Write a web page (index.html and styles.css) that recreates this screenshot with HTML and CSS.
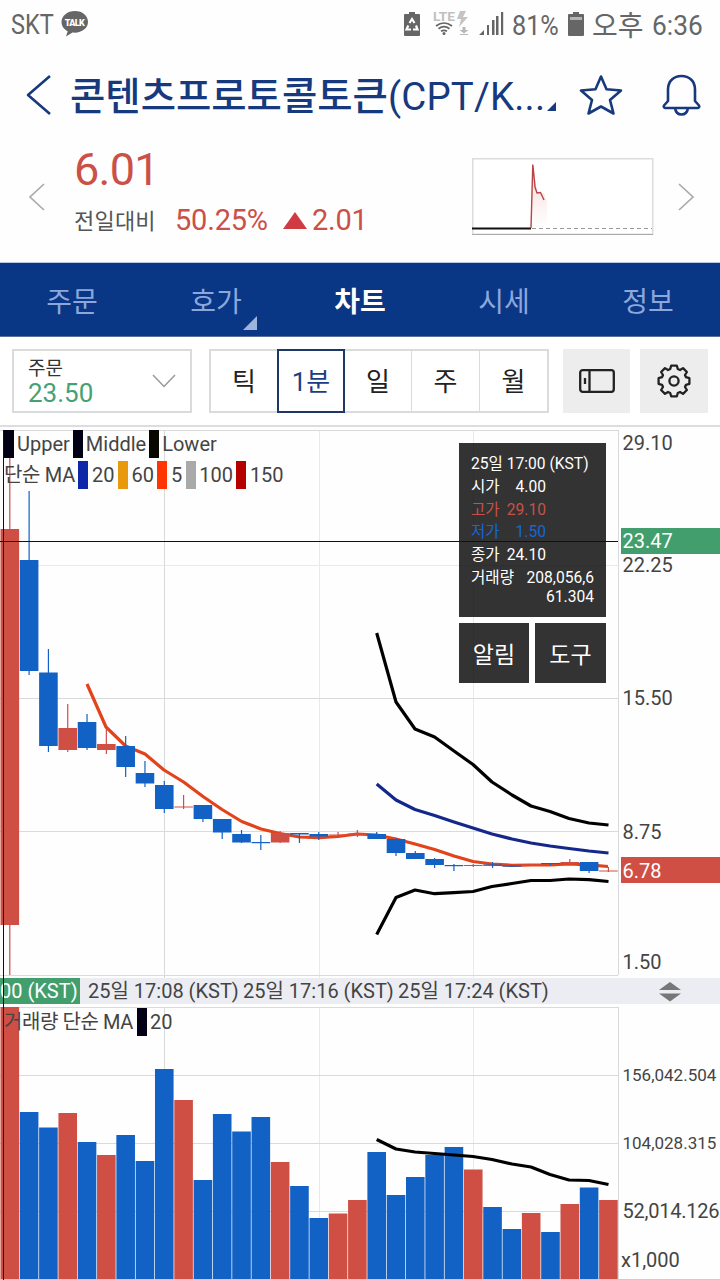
FILE: index.html
```html
<!DOCTYPE html>
<html lang="ko">
<head>
  <meta charset="UTF-8">
  <title>콘텐츠프로토콜토큰 차트</title>
  <link rel="stylesheet" href="styles.css">
</head>
<body>
  <div class="status">
    <span class="carrier">SKT</span>
    <svg class="talk" width="28" height="26" viewBox="0 0 28 26">
      <path d="M14 0C6.500 0 .5 4.800 .5 11c0 4 2.500 7.300 6.200 9.200L5 25.500l6.500-4c8.500 1 15.500-4 15.500-10.500C27 4.800 21.500 0 14 0z" fill="#666"/>
      <text x="13.800" y="14.500" text-anchor="middle" textLength="20">TALK</text>
    </svg>
    <svg class="status-icons" width="108" height="28" viewBox="402 10 108 28">
      <path d="M409 12h6v2h4q1 0 1 1v20q0 1-1 1h-14q-1 0-1-1V15q0-1 1-1h4z" fill="#666"/>
      <g fill="none" stroke="#fff" stroke-width="2.200">
        <path d="M409.500 23l2.500-4 2.500 4M416 25.500l1.500 4h-4.500M411 29.500h-4.500l1.800-4"/>
      </g>
      <text x="433" y="21" class="lte" textLength="22" lengthAdjust="spacingAndGlyphs">LTE</text>
      <path d="M460 11h6l-3 6h5l-9 10 2-8h-4z" fill="#c4c4c4"/>
      <path d="M462.500 27h3v3h3l-4.500 3.500-4.500-3.500h3zM460 34h8v1h-8z" fill="#b8b8b8"/>
      <g fill="none" stroke="#666" stroke-width="1.700">
        <path d="M436 26q8-6 16 0M438.500 28.700q5.500-4 11 0M441 31.300q3-2 6 0"/>
      </g>
      <circle cx="444" cy="33.500" r="1.500" fill="#666"/>
      <path d="M479 35h5v-5zM487 25h2v10h-2zM492 20h2.500v15h-2.500zM496 16h2.500v19h-2.500zM501 12h2.200v23h-2.200z" fill="#666"/>
    </svg>
    <span class="percent">81%</span>
    <svg class="battery" width="16" height="24" viewBox="0 0 16 24">
      <path d="M5 0h6v2h4q1 0 1 1v20q0 1-1 1H1q-1 0-1-1V3q0-1 1-1h4z" fill="#666"/>
      <path d="M2 5h12v3H2z" fill="#b5b5b5"/>
    </svg>
    <span class="ampm">오후</span>
    <span class="clock">6:36</span>
  </div>

  <header class="title-bar">
    <svg class="back" width="26" height="42" viewBox="0 0 26 42"><path d="M24 2L2 21l22 19"/></svg>
    <h1>콘텐츠프로토콜토큰<span class="latin">(CPT/K...</span></h1>
    <i class="corner"></i>
    <svg class="star" width="44" height="42" viewBox="0 0 44 42"><path d="M22 2.500l5.500 12.700 14.500 1.300-11 9.500 3.500 13.500L22 32.500 9.500 39.500 13 26 2 16.500l14.500-1.300z"/></svg>
    <svg class="bell" width="40" height="42" viewBox="0 0 40 42"><path d="M6 27V15.500C6 7 12 2 19.500 2S33 7 33 15.500V27l4 4.500q1 2-1.500 2.500H3.500Q1 33.500 2 31.500zM13 34q1 6.500 6.500 6.500T26 34"/></svg>
  </header>

  <section class="quote">
    <svg class="arrow" width="18" height="30" viewBox="0 0 18 30"><path d="M16 2L2 15l14 13"/></svg>
    <div class="price">
      <div class="current">6.01</div>
      <div class="change"><span class="label">전일대비</span><span class="rate">50.25%</span><i class="up"></i><span>2.01</span></div>
    </div>
    <svg class="mini" width="182" height="78" viewBox="0 0 182 78">
      <defs><linearGradient id="fade" x2="0" y2="1"><stop stop-color="#f3c0c0"/><stop offset="1" stop-color="#fff"/></linearGradient></defs>
      <rect x=".75" y=".75" width="180" height="75.500" fill="#fff" stroke="#dcdcdc" stroke-width="1.500"/>
      <path d="M0 76.500h181" stroke="#aaa"/>
      <path d="M59 70L61 7l4 27 3 2 4-1 3 8v27z" fill="url(#fade)" opacity=".6"/>
      <path d="M60 70.500h120" stroke="#999" stroke-dasharray="4 3"/>
      <path d="M0 70.500h59" stroke="#111" stroke-width="1.800"/>
      <path d="M59 70l1.800-63.500L62 18l1 11 2 6 3.500-.5L72 42" fill="none" stroke="#b94444" stroke-width="1.400"/>
    </svg>
    <svg class="arrow" width="18" height="30" viewBox="0 0 18 30"><path d="M2 2l14 13L2 28"/></svg>
  </section>

  <nav class="tabs">
    <a>주문</a>
    <a class="more">호가</a>
    <a class="active">차트</a>
    <a>시세</a>
    <a>정보</a>
  </nav>

  <div class="toolbar">
    <div class="order">
      <div>
        <div class="order-name">주문</div>
        <div class="order-price">23.50</div>
      </div>
      <svg width="24" height="14" viewBox="0 0 24 14"><path d="M1 1l11 11.500L23 1"/></svg>
    </div>
    <div class="periods">
      <button>틱</button>
      <button class="on">1분</button>
      <button>일</button>
      <button>주</button>
      <button>월</button>
    </div>
    <button class="tool">
      <svg width="36" height="24" viewBox="0 0 36 24"><rect x="1.200" y="1.200" width="33.600" height="21.600" rx="2.500"/><path d="M10.500 1v22M6 9v6"/></svg>
    </button>
    <button class="tool">
      <svg width="34" height="34" viewBox="-17 -17 34 34">
        <path d="M-3.800-12l1-3.400h5.600l1 3.400L6-11l3-1.900L12.900-9 11-6l1 2.200 3.400 1v5.600l-3.400 1L11 6l1.900 3L9 12.900 6 11l-2.200 1-1 3.400h-5.600l-1-3.400L-6 11l-3 1.900L-12.900 9-11 6l-1-2.200-3.400-1v-5.600l3.400-1L-11-6l-1.900-3L-9-12.900-6-11z"/>
        <circle r="4.600"/>
      </svg>
    </button>
  </div>

  <main class="charts">
    <svg class="price-chart" width="720" height="551" viewBox="0 427 720 551">
      <path class="grid light" d="M0 565.500h618M319.500 430v548M473.500 430v548"/>
      <path class="grid" d="M0 430.500h618M0 698.500h618M0 831.500h618M0 975.500h618M164.500 430v548M618.500 430v545"/>
      <polyline class="line ma5" points="87,684 106,727 125.600,746 145,754 164,770 183.600,782 203,796.500 222,809.500 241.700,821.500 261,829 280,833.500 299.500,837 319,837.600 338,836.500 357,834 376.700,835 396,839 415,844 434.600,849.500 454,856 473,861.500 492,864 512,865.300 531,865 550,864.800 569,864 589,864.800 608,866.500"/>
      <g id="candles"></g>
      <polyline class="line middle" points="376.700,784 396,800 415,809.500 434.600,815.500 454,822 473,828 492,834 512,839 531,843 550,846 569,848.500 589,851 608.500,853"/>
      <polyline class="line" points="376.700,633 396,702 415,729 434.600,737 454,751 473,764.500 492,782 512,795 531,806 550,811.500 569,818.500 589,823 608.500,825"/>
      <polyline class="line" points="376.700,934.500 396,897.500 415,890 434.600,893.700 454,892.700 473,891.500 492,886.500 512,883.500 531,880.500 550,880.500 569,879 589,879.700 608.500,881.500"/>
      <g class="axis">
        <text x="622.500" y="450">29.10</text>
        <text x="622.500" y="572">22.25</text>
        <text x="622.500" y="705">15.50</text>
        <text x="622.500" y="838.500">8.75</text>
        <text x="622.500" y="968.500">1.50</text>
        <rect x="621" y="528" width="99" height="26" fill="#429f6d"/>
        <rect x="621" y="857" width="99" height="26" fill="#cf4f45"/>
        <text class="tag" x="622.500" y="548">23.47</text>
        <text class="tag" x="622.500" y="877.500">6.78</text>
      </g>
    </svg>

    <div class="time-axis">
      <span class="now">00 (KST)</span>
      <span>25일 17:08 (KST)</span>
      <span>25일 17:16 (KST)</span>
      <span>25일 17:24 (KST)</span>
      <svg width="22" height="20" viewBox="0 0 22 20"><path d="M11 0l11 8H0zM0 11.500h22l-11 8z" fill="#777"/></svg>
    </div>

    <svg class="volume-chart" width="720" height="276" viewBox="0 1004 720 276">
      <path class="grid light" d="M319.500 1007v273M473.500 1007v273"/>
      <path class="grid" d="M0 1007.500h618M0 1075.500h618M0 1143.500h618M0 1211.500h618M164.500 1007v273M618.500 1007v273"/>
      <g id="volumes"></g>
      <path d="M0 1279.500h720" stroke="#ccc"/>
      <polyline class="line" points="376.700,1139.500 396,1149 415,1152 434.600,1153.500 454,1155 473,1156.500 492,1159.500 512,1164 531,1167 550,1174.500 569,1180 589,1180.500 608.500,1184.500"/>
      <g class="axis">
        <text class="small" x="622.500" y="1081">156,042.504</text>
        <text class="small" x="622.500" y="1149">104,028.315</text>
        <text x="622.500" y="1218" textLength="97">52,014.126</text>
        <text x="621" y="1267">x1,000</text>
      </g>
    </svg>

    <div class="legend bands"><i></i>Upper<i></i>Middle<i class="lower"></i>Lower</div>
    <div class="legend averages"><span>단순 MA</span><i class="c20"></i>20<i class="c60"></i>60<i class="c5"></i>5<i class="c100"></i>100<i class="c150"></i>150</div>
    <div class="legend volume"><span>거래량 단순 MA</span><i></i>20</div>

    <div class="info">
      <div>25일 17:00 (KST)</div>
      <div><span>시가</span><b>4.00</b></div>
      <div class="high"><span>고가</span><b>29.10</b></div>
      <div class="low"><span>저가</span><b>1.50</b></div>
      <div><span>종가</span><b>24.10</b></div>
      <div class="amount"><span>거래량</span><b>208,056,6<br>61.304</b></div>
    </div>
    <div class="actions">
      <button>알림</button>
      <button>도구</button>
    </div>
    <i class="cross-x"></i>
    <i class="cross-y"></i>
  </main>

  <script src="chart.js"></script>
</body>
</html>
```
FILE: styles.css
```css
* {
  box-sizing: border-box;
}

body {
  width: 720px;
  height: 1280px;
  margin: 0;
  overflow: hidden;
  background: #fefefe;
  color: #333;
  font-family: Roboto, "Noto Sans CJK KR", sans-serif;
}

button {
  padding: 0;
  border: none;
  font-family: inherit;
}

/* status bar */
.status {
  display: flex;
  height: 50px;
  padding-left: 11px;
  color: #666;
  font-size: 28px;
  line-height: 50px;
  white-space: nowrap;
}

.status span {
  transform-origin: 0 50%;
}

.carrier {
  width: 50px;
  transform: scaleX(0.84);
}

.talk {
  margin-top: 11px;
}

.talk text {
  fill: #fff;
  font-size: 9px;
  font-weight: 900;
}

.status-icons {
  margin: 10px 2px 0 313px;
}

.lte {
  fill: #c0c0c0;
  font-size: 12px;
  font-weight: 700;
}

.percent {
  width: 56px;
  padding-top: 1px;
  transform: scaleX(0.9);
}

.battery {
  margin: 12px 8px 0 0;
}

.ampm {
  width: 60px;
  padding-top: 2px;
}

.clock {
  width: 60px;
  padding-top: 1px;
  transform: scaleX(0.94);
}

/* title */
.title-bar {
  display: flex;
  align-items: center;
  height: 90px;
  color: #17397d;
}

.title-bar svg {
  fill: none;
  stroke: #17397d;
  stroke-width: 2.6;
  stroke-linejoin: round;
}

.back {
  margin-left: 26px;
}

h1 {
  width: 477px;
  margin: 0 0 0 18px;
  padding-top: 4px;
  font-size: 38.4px;
  font-weight: 500;
  line-height: 86px;
  white-space: nowrap;
}

.latin {
  font-weight: 400;
  letter-spacing: 0.2px;
}

.corner {
  align-self: flex-start;
  margin-top: 52px;
  border-left: 9px solid transparent;
  border-bottom: 9px solid #17397d;
}

.star {
  margin-left: 23px;
}

.bell {
  margin-left: 39px;
}

/* quote */
.quote {
  display: flex;
  height: 122px;
  color: #cb5048;
}

.arrow {
  margin: 42px 0 0 28px;
  fill: none;
  stroke: #aaa;
  stroke-width: 1.7;
}

.price {
  width: 426px;
  padding-left: 28px;
}

.current {
  height: 60px;
  font-size: 45px;
  letter-spacing: -0.7px;
  line-height: 60px;
}

.change {
  display: flex;
  font-size: 29px;
  letter-spacing: -0.2px;
  line-height: 41px;
}

.label {
  width: 101px;
  color: #555;
  font-size: 22px;
  letter-spacing: 0.2px;
  line-height: 43px;
}

.up {
  height: 0;
  margin: 12px 5px 0 15px;
  border: 12px solid transparent;
  border-top: 0;
  border-bottom: 17px solid #d03a42;
}

.mini {
  margin-top: 18px;
}

.mini + .arrow {
  margin-left: 23px;
}

/* tabs */
.tabs {
  display: grid;
  grid-template-columns: repeat(5, 1fr);
  height: 75px;
  border-top: 1px solid #b9cbe4;
  border-bottom: 1px solid #5e6f9c;
  background: #0a3686;
}

.tabs a {
  position: relative;
  padding-top: 3px;
  color: #8ba7dc;
  font-size: 28px;
  line-height: 74px;
  text-align: center;
}

.tabs .active {
  color: #fff;
  font-weight: 700;
}

.more::after {
  content: "";
  position: absolute;
  right: 31px;
  bottom: 10px;
  border-left: 14px solid transparent;
  border-bottom: 14px solid #9db4dd;
}

/* toolbar */
.toolbar {
  display: flex;
  height: 90px;
  padding: 12px 12px 0;
  border-bottom: 2px solid #dcdddf;
  background: #fff;
}

.order {
  display: flex;
  justify-content: space-between;
  width: 180px;
  height: 64px;
  margin-right: 17px;
  padding: 5px 14px;
  border: 2px solid #dadbdd;
}

.order svg {
  margin-top: 18px;
  fill: none;
  stroke: #999;
  stroke-width: 1.5;
}

.order-name {
  font-size: 19px;
  line-height: 25px;
}

.order-price {
  color: #45a174;
  font-size: 26px;
  line-height: 25px;
}

.periods {
  display: grid;
  grid-template-columns: 66px 68px 67px 68px 67px;
  width: 340px;
  height: 64px;
  margin-right: 14px;
  border: 2px solid #dadbdd;
}

.periods button {
  padding-bottom: 3px;
  border-right: 1px solid #dadbdd;
  background: #fff;
  color: #222;
  font-size: 26px;
}

.periods button:first-child,
.periods button:last-child {
  border-right: 0;
}

.periods .on {
  margin: -2px 0;
  border: 2px solid #1e3767;
  color: #1b3d82;
}

.tool {
  display: flex;
  align-items: center;
  justify-content: center;
  width: 67px;
  height: 64px;
  margin-right: 10px;
  background: #ededed;
}

.tool:last-child {
  width: 68px;
  margin-right: 0;
}

.tool svg {
  fill: none;
  stroke: #222;
  stroke-width: 2.3;
  stroke-linejoin: round;
}

/* charts */
.charts {
  position: relative;
}

.charts > svg {
  display: block;
}

.grid {
  fill: none;
  stroke: #d8dadc;
}

.grid.light {
  stroke: #e9eaec;
}

.line {
  fill: none;
  stroke: #000;
  stroke-width: 3.2;
  stroke-linejoin: round;
}

.ma5 {
  stroke: #e2431a;
}

.middle {
  stroke: #14288c;
}

.axis {
  fill: #444;
  font-size: 20px;
}

.axis .small {
  font-size: 17px;
}

.axis .tag {
  fill: #fff;
}

.time-axis {
  display: flex;
  height: 26px;
  background: #ecedf3;
  color: #444;
  font-size: 20px;
  line-height: 27px;
  white-space: nowrap;
}

.time-axis span {
  width: 155px;
}

.time-axis .now {
  width: 80px;
  margin-right: 8px;
  background: #429f6d;
  color: #fff;
}

.time-axis svg {
  margin: 4px 0 0 106px;
}

.legend {
  position: absolute;
  left: 4px;
  display: flex;
  color: #444;
  font-size: 20px;
  line-height: 28px;
  white-space: pre;
}

.legend i {
  width: 10px;
  height: 28px;
  margin: 0 3px;
  background: #020014;
}

.bands {
  top: 3px;
}

.bands i:first-child {
  margin-left: 0;
}

.averages {
  top: 34px;
}

.averages span {
  width: 71px;
  letter-spacing: -0.3px;
}

.averages i {
  margin: 0 3.6px 0 3.4px;
}

.legend.volume {
  top: 581px;
}

.volume span {
  width: 130px;
  letter-spacing: -0.4px;
}

.legend .lower { background: #080700; }
.legend .c20 { background: #0c28a8; }
.legend .c60 { background: #e89a0c; }
.legend .c5 { background: #ff3600; }
.legend .c100 { background: #a9a9a9; }
.legend .c150 { background: #b50000; }

.info {
  position: absolute;
  left: 459px;
  top: 16px;
  width: 147px;
  height: 174px;
  padding: 10px 12px;
  background: rgba(0, 0, 0, 0.8);
  color: #fff;
  font-size: 15.6px;
  line-height: 22.8px;
  white-space: nowrap;
}

.info div {
  display: flex;
  justify-content: space-between;
  width: 75px;
}

.info b {
  font-weight: 400;
}

.info .high {
  color: #c55249;
}

.info .low {
  color: #1766d4;
}

.info .amount {
  width: 123px;
  line-height: 19px;
  padding-top: 2px;
  text-align: right;
}

.actions {
  position: absolute;
  left: 459px;
  top: 196px;
  display: flex;
  gap: 6px;
}

.actions button {
  width: 70px;
  height: 60px;
  background: rgba(0, 0, 0, 0.8);
  color: #fff;
  font-size: 23px;
}

.actions button:last-child {
  width: 71px;
}

.cross-x,
.cross-y {
  position: absolute;
  left: 0;
  top: 114px;
  width: 618px;
  height: 1px;
  background: #111;
}

.cross-y {
  left: 3px;
  top: 3px;
  width: 1px;
  height: 850px;
}
```
FILE: chart.js
```js
const RED = '#cf4f45';
const BLUE = '#1261c4';
const STEP = 19.31;
const WIDTH = 18.6;

// color, body top, body bottom, wick top, wick bottom, volume top
const bars = [
  [RED, 529, 925, 431, 975, 1007],
  [BLUE, 560, 671, 491, 675, 1112],
  [BLUE, 672.5, 746, 649, 752, 1127.5],
  [RED, 728, 750, 704, 752, 1113],
  [BLUE, 722, 748, 714, 750, 1142],
  [RED, 744, 750, 728, 754, 1155],
  [BLUE, 746, 767, 736, 777, 1135],
  [BLUE, 773, 783.5, 761, 787, 1161],
  [BLUE, 785, 809, 781, 813, 1069],
  [RED, 806.5, 807.5, 795, 809, 1100],
  [BLUE, 805, 819, 805, 822, 1180],
  [BLUE, 819, 832.5, 819, 839, 1114],
  [BLUE, 834, 842.5, 830, 843, 1131.5],
  [BLUE, 842, 843.2, 835, 850, 1117],
  [RED, 833, 842.5, 831, 843, 1162],
  [BLUE, 833, 834.5, 833, 843, 1186],
  [BLUE, 834, 836.5, 832, 840, 1218],
  [RED, 834.5, 835.5, 832, 837, 1213.5],
  [RED, 833.5, 834.5, 830, 837, 1200],
  [BLUE, 834, 839, 832, 839, 1152],
  [BLUE, 839, 853, 838, 856, 1195],
  [BLUE, 853, 859, 851, 859, 1177],
  [BLUE, 859, 865, 858, 868, 1155],
  [BLUE, 865, 866.2, 864, 871, 1147],
  [RED, 865, 866, 864, 867, 1169.5],
  [BLUE, 864.5, 865.8, 862, 868, 1207],
  [BLUE, 865.5, 866.7, 865, 867, 1229],
  [RED, 864.5, 865.5, 864, 866, 1213],
  [BLUE, 863, 864, 863, 865, 1232],
  [RED, 862, 863, 859, 864, 1204],
  [BLUE, 862, 871, 862, 873, 1187.5],
  [RED, 870.5, 871.5, 867, 872, 1200]
];

function rect(x, y, width, height, fill) {
  return `<rect x="${x}" y="${y}" width="${width}" height="${height}" fill="${fill}"/>`;
}

let candles = '';
let volumes = '';

bars.forEach(([color, top, bottom, high, low, volume], i) => {
  const center = 9.8 + STEP * i;
  const left = center - WIDTH / 2;
  candles += rect(center - 0.6, high, 1.2, low - high, color);
  candles += rect(left, top, WIDTH, bottom - top, color);
  volumes += rect(left, volume, WIDTH, 1279 - volume, color);
});

document.getElementById('candles').innerHTML = candles;
document.getElementById('volumes').innerHTML = volumes;
```
